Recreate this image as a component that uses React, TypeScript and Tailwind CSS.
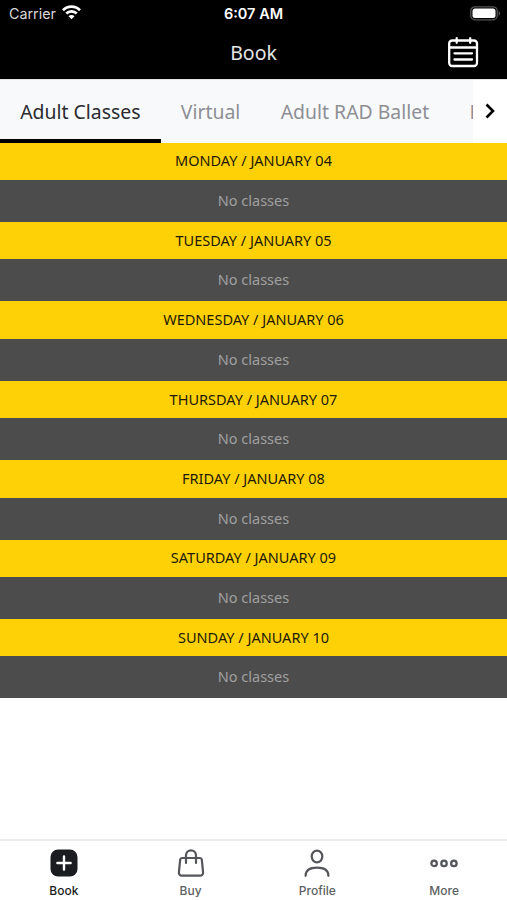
import { useState } from "react";

const days = [
  "MONDAY / JANUARY 04",
  "TUESDAY / JANUARY 05",
  "WEDNESDAY / JANUARY 06",
  "THURSDAY / JANUARY 07",
  "FRIDAY / JANUARY 08",
  "SATURDAY / JANUARY 09",
  "SUNDAY / JANUARY 10",
];

const tabs = ["Adult Classes", "Virtual", "Adult RAD Ballet", "H"];

function StatusBar() {
  return (
    <div className="grid h-7 grid-cols-3 items-center px-[9px] text-white font-['Inter',sans-serif]">
      <div className="flex items-center gap-[6px]">
        <span className="text-[14.3px] leading-none text-[#d8d8d8]">Carrier</span>
        <svg className="-mt-[2px]" width="19" height="15" viewBox="0 0 19 15" fill="none" stroke="white" strokeWidth="2.7">
          <path d="M1 5.2a12 12 0 0 1 17 0" />
          <path d="M4.2 8.5a7.5 7.5 0 0 1 10.6 0" />
          <path d="M9.5 14.2 6.5 11.2a4.2 4.2 0 0 1 6 0z" fill="white" stroke="none" />
        </svg>
      </div>
      <span className="text-center text-[14.5px] leading-none font-semibold whitespace-nowrap">6:07 AM</span>
      <svg className="-mt-[2px] -mr-[3px] justify-self-end" width="31" height="15" viewBox="0 0 31 15">
        <rect x="0.8" y="0.8" width="26.4" height="13" rx="4" fill="none" stroke="#555" strokeWidth="1.3" />
        <rect x="2.5" y="2.5" width="23" height="9.6" rx="2.5" fill="white" />
        <path d="M28.6 5v4.8c2-.8 2-4 0-4.8z" fill="#555" />
      </svg>
    </div>
  );
}

function Header() {
  return (
    <div className="grid h-12 grid-cols-3 items-center">
      <h1 className="col-start-2 pt-px text-center text-[19.5px] leading-none text-[#e6e6e6]">Book</h1>
      <svg
        className="mr-[28px] justify-self-end"
        width="32"
        height="32"
        viewBox="0 0 32 32"
        fill="none"
        stroke="white"
        strokeWidth="2.3"
        strokeLinecap="round"
      >
        <rect x="2.2" y="4.5" width="27.8" height="25.5" rx="3" />
        <path d="M2.2 11.5h27.8M9.7 2.2v4.6M23.2 2.2v4.6" />
        <path d="M7.5 17.3h17.5M7.5 23.5h17.5" />
      </svg>
    </div>
  );
}

function BookIcon() {
  return (
    <svg width="28" height="28" viewBox="0 0 28 28">
      <rect x="0.5" y="0.5" width="27" height="27" rx="7.5" fill="#1b1c20" />
      <path d="M14 7.4v13.2M7.4 14h13.2" stroke="white" strokeWidth="2.4" strokeLinecap="round" />
    </svg>
  );
}

function BuyIcon() {
  return (
    <svg width="28" height="28" viewBox="0 0 28 28" fill="none" stroke="#54565a" strokeWidth="2.2" strokeLinecap="round">
      <path d="M5 9h18a1.8 1.8 0 0 1 1.8 1.6l1.3 12.8a3 3 0 0 1-3 3.3H4.9a3 3 0 0 1-3-3.3L3.2 10.6A1.8 1.8 0 0 1 5 9z" />
      <path d="M9 14V6.4a5 5 0 0 1 10 0V14" />
    </svg>
  );
}

function ProfileIcon() {
  return (
    <svg width="28" height="28" viewBox="0 0 28 28" fill="none" stroke="#54565a" strokeWidth="2.2" strokeLinecap="round">
      <ellipse cx="14" cy="7.5" rx="5.3" ry="5.9" />
      <path d="M2.6 26.8c0-5.8 4.2-8.2 11.4-8.2s11.4 2.4 11.4 8.2" />
    </svg>
  );
}

function MoreIcon() {
  return (
    <svg width="28" height="28" viewBox="0 0 28 28" fill="none" stroke="#54565a" strokeWidth="2.3">
      <circle cx="4.1" cy="14.4" r="2.7" />
      <circle cx="14" cy="14.4" r="2.7" />
      <circle cx="23.9" cy="14.4" r="2.7" />
    </svg>
  );
}

const navItems = [
  { label: "Book", icon: BookIcon },
  { label: "Buy", icon: BuyIcon },
  { label: "Profile", icon: ProfileIcon },
  { label: "More", icon: MoreIcon },
];

export default function App() {
  const [tab, setTab] = useState("Adult Classes");
  const [page, setPage] = useState("Book");

  return (
    <div className="flex h-[900px] w-[507px] flex-col overflow-hidden bg-white font-['Noto_Sans',sans-serif]">
      <header className="h-[79px] shrink-0 bg-black">
        <StatusBar />
        <Header />
      </header>

      <div className="flex h-[63.5px] shrink-0 border-t border-[#e3e3e3] bg-white">
        <div className="flex w-[473px] overflow-hidden bg-[#f8f9fb]">
          {tabs.map((t) => (
            <button
              key={t}
              onClick={() => setTab(t)}
              className={`shrink-0 border-b-4 px-[20.2px] pt-1 text-[19.4px] whitespace-nowrap ${
                tab === t ? "border-black text-[#2b2c30]" : "border-transparent text-[#8e8f94]"
              }`}
            >
              {t}
            </button>
          ))}
        </div>
        <button className="flex flex-1 items-center justify-center" aria-label="Next">
          <svg width="10" height="16" viewBox="0 0 10 16" fill="none" stroke="black" strokeWidth="2.6">
            <path d="M1.5 1.5 8 8l-6.5 6.5" />
          </svg>
        </button>
      </div>

      <main className="flex-1">
        {days.map((day) => (
          <section key={day}>
            <h2 className="flex h-[37.4px] items-center justify-center bg-[#fed107] text-[14.5px] text-[#1f1a05]">
              {day}
            </h2>
            <p className="flex h-[42.03px] items-center justify-center bg-[#4c4c4c] text-[14.5px] text-[#a0a0a0]">
              No classes
            </p>
          </section>
        ))}
      </main>

      <nav className="grid h-[61px] shrink-0 grid-cols-4 border-t-2 border-[#ececec] bg-white font-['Inter',sans-serif]">
        {navItems.map(({ label, icon: Icon }) => (
          <button key={label} onClick={() => setPage(label)} className="flex flex-col items-center pt-2 pl-px">
            <Icon />
            <span
              className={`mt-[7px] text-[12px] leading-[14px] font-medium ${
                page === label ? "text-[#1b1c20]" : "text-[#5d5f63]"
              }`}
            >
              {label}
            </span>
          </button>
        ))}
      </nav>
    </div>
  );
}
